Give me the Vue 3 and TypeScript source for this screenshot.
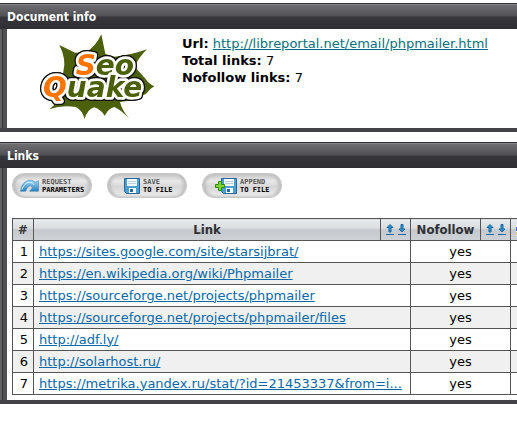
<script setup lang="ts">
interface LinkRow {
  url: string
  nofollow: string
}

const documentUrl = 'http://libreportal.net/email/phpmailer.html'

const links: LinkRow[] = [
  { url: 'https://sites.google.com/site/starsijbrat/', nofollow: 'yes' },
  { url: 'https://en.wikipedia.org/wiki/Phpmailer', nofollow: 'yes' },
  { url: 'https://sourceforge.net/projects/phpmailer', nofollow: 'yes' },
  { url: 'https://sourceforge.net/projects/phpmailer/files', nofollow: 'yes' },
  { url: 'http://adf.ly/', nofollow: 'yes' },
  { url: 'http://solarhost.ru/', nofollow: 'yes' },
  { url: 'https://metrika.yandex.ru/stat/?id=21453337&from=i...', nofollow: 'yes' },
]
</script>

<template>
  <main class="page">
    <section class="panel">
      <h2 class="panel-title">Document info</h2>
      <div class="panel-body info">
        <svg class="logo" viewBox="111 99 357 264" role="img" aria-label="SeoQuake">
          <path
            fill="#4b6008"
            d="M178 135Q205 148 225 158Q246 158 258 157Q288 138 304 103Q310 134 316 161Q332 168 345 170Q390 166 441 148Q416 172 404 200L435 235Q447 253 463 259Q449 266 440 280Q410 302 360 306Q366 331 388 356Q362 329 343 321Q326 325 314 347Q301 327 283 322Q261 329 254 357Q246 330 228 321Q185 314 148 328Q171 310 182 292L190 215Q200 178 178 135Z"
          />
          <g class="logo-text">
            <text x="227" y="226"><tspan class="accent">S</tspan>eo</text>
            <text x="129" y="291"><tspan class="accent">Q</tspan>uake</text>
          </g>
        </svg>
        <div class="facts">
          <div><b>Url:</b> <a class="doc-link" :href="documentUrl">{{ documentUrl }}</a></div>
          <div><b>Total links:</b> 7</div>
          <div><b>Nofollow links:</b> 7</div>
        </div>
      </div>
    </section>

    <section class="panel">
      <h2 class="panel-title">Links</h2>
      <div class="panel-body">
        <div class="actions">
          <button type="button" class="action">
            <svg class="action-icon" viewBox="0 0 20 16" aria-hidden="true">
              <defs>
                <linearGradient id="wave" x1="0" y1="0" x2="0" y2="1">
                  <stop offset="0" stop-color="#a5d9f2" />
                  <stop offset="1" stop-color="#257fc0" />
                </linearGradient>
              </defs>
              <path
                fill="url(#wave)"
                stroke="#3a86bb"
                stroke-width=".6"
                d="M.5 13.5Q2 4 9 2Q13 1 16 4L19.5 2.500V13.500H10L13 10Q12 6.500 9.500 8Q7 10 6 13.500Z"
              />
              <path fill="none" stroke="#d8f3ff" d="M2 12Q4 5 10 4Q13 4 15 7" />
            </svg>
            <span class="action-label"><span>REQUEST</span><b>PARAMETERS</b></span>
          </button>

          <button type="button" class="action action-save">
            <svg class="action-icon disk-icon" viewBox="3 0 16 16" aria-hidden="true">
              <path fill="#4b9fd2" stroke="#28679b" d="M3.500 .5H18.500V15.500H5.500L3.500 13.500Z" />
              <path fill="#f5fbff" d="M6 1H16V8H6Z" />
              <path stroke="#b9cedb" d="M7 3.500H15M7 5.500H15" />
              <path fill="#fff" d="M8 10H15V15H8Z" />
              <path fill="#28679b" d="M9 11H12V14H9Z" />
            </svg>
            <span class="action-label"><span>SAVE</span><b>TO FILE</b></span>
          </button>

          <button type="button" class="action action-append">
            <svg class="action-icon append-icon" viewBox="0 0 22 16" aria-hidden="true">
              <path fill="#4b9fd2" stroke="#28679b" d="M6.500 .5H21.500V15.500H8.500L6.500 13.500Z" />
              <path fill="#f5fbff" d="M9 1H19V8H9Z" />
              <path stroke="#b9cedb" d="M10 3.500H18M10 5.500H18" />
              <path fill="#fff" d="M11 10H18V15H11Z" />
              <path fill="#28679b" d="M12 11H15V14H12Z" />
              <path
                fill="#7ed62f"
                stroke="#2c8a12"
                d="M3.500 3.500H6.500V6.500H9.500V9.500H6.500V12.500H3.500V9.500H.5V6.500H3.500Z"
              />
            </svg>
            <span class="action-label"><span>APPEND</span><b>TO FILE</b></span>
          </button>
        </div>

        <table class="links">
          <colgroup>
            <col class="col-num" />
            <col class="col-link" />
            <col class="col-sort" />
            <col class="col-flag" />
            <col class="col-sort" />
            <col class="col-extra" />
          </colgroup>
          <thead>
            <tr>
              <th>#</th>
              <th>Link</th>
              <th>
                <span class="sort">
                  <a href="#" aria-label="Sort links ascending">
                    <svg viewBox="0 0 8 11"><path d="M4 .5L1 3.500H3V8H5V3.500H7Z" /><path d="M0 10.500H8" /></svg>
                  </a>
                  <a href="#" aria-label="Sort links descending">
                    <svg viewBox="0 0 8 11"><path d="M4 8L1 5H3V.5H5V5H7Z" /><path d="M0 10.500H8" /></svg>
                  </a>
                </span>
              </th>
              <th>Nofollow</th>
              <th>
                <span class="sort">
                  <a href="#" aria-label="Sort nofollow ascending">
                    <svg viewBox="0 0 8 11"><path d="M4 .5L1 3.500H3V8H5V3.500H7Z" /><path d="M0 10.500H8" /></svg>
                  </a>
                  <a href="#" aria-label="Sort nofollow descending">
                    <svg viewBox="0 0 8 11"><path d="M4 8L1 5H3V.5H5V5H7Z" /><path d="M0 10.500H8" /></svg>
                  </a>
                </span>
              </th>
              <th class="extra">
                <svg class="engine" viewBox="0 0 12 12" aria-hidden="true">
                  <path fill="#fff" d="M0 0H12V12H0Z" />
                  <path fill="#3568c8" d="M0 3H3V7H0Z" />
                  <path fill="#f0c468" d="M0 8H4V11H0Z" />
                </svg>
              </th>
            </tr>
          </thead>
          <tbody>
            <tr v-for="(link, index) in links" :key="link.url">
              <td class="num">{{ index + 1 }}</td>
              <td colspan="2" class="link-cell"><a :href="link.url">{{ link.url }}</a></td>
              <td colspan="2" class="flag">{{ link.nofollow }}</td>
              <td></td>
            </tr>
          </tbody>
        </table>
      </div>
    </section>
  </main>
</template>

<style>
body {
  margin: 0;
  background: #fff;
}
</style>

<style scoped>
.page {
  display: flex;
  flex-direction: column;
  gap: 10px;
  padding-top: 3px;
  overflow: hidden;
  color: #000;
  font: 13px/17px Verdana, "DejaVu Sans", sans-serif;
}

.panel-title {
  box-sizing: border-box;
  height: 26px;
  margin: 0;
  padding: 1px 7px 0;
  border-top: 1px solid #302f34;
  background: linear-gradient(#858489 0 1px, #6e6d72 1px, #515055 12px, #37363b 13px, #2f2e33);
  color: #fff;
  font: bold 12px/24px Tahoma, "DejaVu Sans Condensed", "DejaVu Sans", sans-serif;
}

.panel-body {
  border-bottom: 4px solid #434244;
  padding: 5px 0 5px 12px;
  background: linear-gradient(90deg, #626164 0 2px, #343336 2px 3px, #504f52 3px 7px, #fff 7px);
}

.info {
  display: flex;
  align-items: flex-start;
  gap: 26px;
  padding: 4px 0 7px 37px;
}

.logo {
  flex: none;
  width: 119px;
  height: 88px;
}

.logo text {
  font: italic bold 84px "DejaVu Sans", sans-serif;
}

.logo-text {
  fill: #4b6008;
  stroke: #fff;
  stroke-width: 16px;
  stroke-linejoin: round;
  paint-order: stroke;
  filter: drop-shadow(3px 0 0 #111) drop-shadow(-3px 0 0 #111) drop-shadow(0 3px 0 #111) drop-shadow(0 -3px 0 #111);
}

.accent {
  fill: #ff7300;
}

.facts {
  padding-top: 2px;
  white-space: nowrap;
}

a {
  color: #0868a8;
}

.doc-link {
  color: #08717d;
}

.actions {
  display: flex;
  gap: 15px;
  margin-bottom: 20px;
}

.action {
  display: flex;
  align-items: center;
  gap: 3px;
  width: 80px;
  height: 25px;
  padding: 0 0 0 7px;
  border: 1px solid #c8c8c8;
  border-radius: 12px;
  background: linear-gradient(#c5c5c5, #e9e9e9 30%, #d6d6d6 55%, #ededed);
  box-shadow: inset 3px 0 3px #c0c0c0, inset -3px 0 3px #c0c0c0;
  text-align: left;
}

.action-save {
  padding-left: 16px;
}

.action-append {
  padding-left: 12px;
}

.action-icon {
  flex: none;
  width: 19px;
  height: 16px;
}

.disk-icon {
  width: 16px;
}

.append-icon {
  width: 22px;
}

.action-label {
  display: flex;
  flex-direction: column;
  color: #555;
  font: bold 7px/8px "DejaVu Sans Mono", monospace;
  white-space: nowrap;
}

.action-label b {
  color: #000;
}

.links {
  width: 600px;
  border-collapse: collapse;
  table-layout: fixed;
}

.col-num {
  width: 21px;
}

.col-link {
  width: 347px;
}

.col-sort {
  width: 30px;
}

.col-flag {
  width: 70px;
}

th,
td {
  box-sizing: border-box;
  height: 22px;
  padding: 0;
  border: 1px solid #555;
  line-height: 20px;
  white-space: nowrap;
}

th {
  background: linear-gradient(#e8eaec, #d9dcdf 9px, #c5c9ce 10px, #ced1d5);
  color: #303036;
  font: bold 13px/20px Tahoma, "DejaVu Sans Condensed", "DejaVu Sans", sans-serif;
}

tbody tr:nth-child(even) {
  background: #f0f0f0;
}

.num {
  padding-left: 2px;
  text-align: center;
}

.link-cell {
  padding-left: 5px;
}

.flag {
  text-align: center;
}

.sort {
  display: flex;
  justify-content: center;
  gap: 4px;
}

.sort a {
  display: flex;
}

.sort svg {
  width: 8px;
  height: 11px;
  fill: #3c91c7;
  stroke: #0868a8;
}

.extra {
  padding-left: 5px;
  text-align: left;
}

.engine {
  display: block;
  width: 12px;
  height: 12px;
}
</style>
